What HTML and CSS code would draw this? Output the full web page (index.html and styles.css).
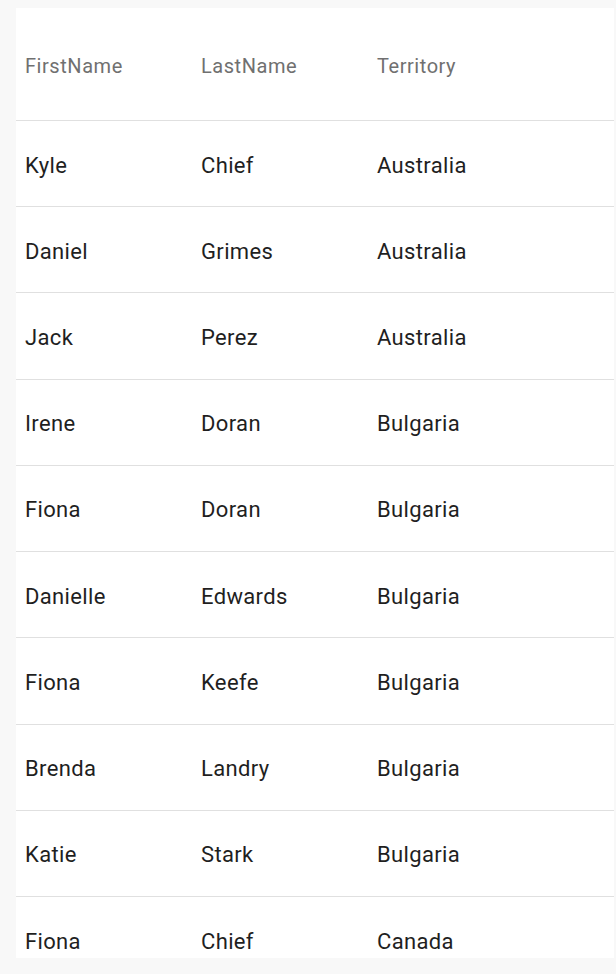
FILE: index.html
```html
<!DOCTYPE html>
<html>
<head>
<meta charset="utf-8">
<link rel="stylesheet" href="styles.css">
</head>
<body>
<div class="panel">
  <div class="row head">
    <div class="cell">FirstName</div><div class="cell">LastName</div><div class="cell">Territory</div>
  </div>
  <div class="row"><div class="cell">Kyle</div><div class="cell">Chief</div><div class="cell">Australia</div></div>
  <div class="row"><div class="cell">Daniel</div><div class="cell">Grimes</div><div class="cell">Australia</div></div>
  <div class="row"><div class="cell">Jack</div><div class="cell">Perez</div><div class="cell">Australia</div></div>
  <div class="row"><div class="cell">Irene</div><div class="cell">Doran</div><div class="cell">Bulgaria</div></div>
  <div class="row"><div class="cell">Fiona</div><div class="cell">Doran</div><div class="cell">Bulgaria</div></div>
  <div class="row"><div class="cell">Danielle</div><div class="cell">Edwards</div><div class="cell">Bulgaria</div></div>
  <div class="row"><div class="cell">Fiona</div><div class="cell">Keefe</div><div class="cell">Bulgaria</div></div>
  <div class="row"><div class="cell">Brenda</div><div class="cell">Landry</div><div class="cell">Bulgaria</div></div>
  <div class="row"><div class="cell">Katie</div><div class="cell">Stark</div><div class="cell">Bulgaria</div></div>
  <div class="row"><div class="cell">Fiona</div><div class="cell">Chief</div><div class="cell">Canada</div></div>
</div>
</body>
</html>
```
FILE: styles.css
```css
html, body {
  margin: 0;
  padding: 0;
  background: #f8f8f8;
}
body {
  padding: 8px 2px 16px 16px;
  font-family: Roboto, "Liberation Sans", sans-serif;
}
.panel {
  background: #ffffff;
  height: 950px;
  overflow: hidden;
}
.row {
  box-sizing: border-box;
  display: grid;
  grid-template-columns: 176px 176px 1fr;
  align-items: center;
  height: 86.22px;
  padding-top: 3px;
  border-bottom: 1px solid #e0e0e0;
  padding-left: 9px;
  font-size: 22px;
  letter-spacing: 0.35px;
  color: #1f1f1f;
}
.row.head {
  height: 113px;
  padding-top: 3px;
  font-size: 20px;
  letter-spacing: 0.55px;
  color: #707070;
}
```
